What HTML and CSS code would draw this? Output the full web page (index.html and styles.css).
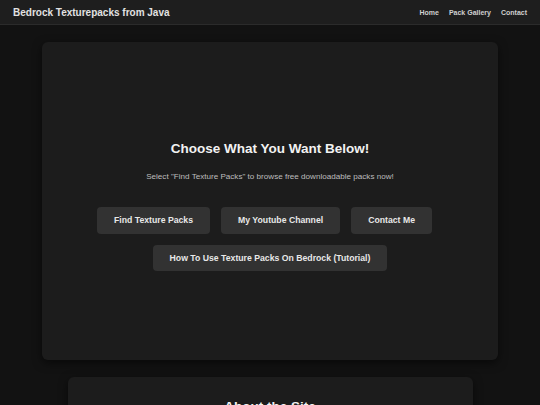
FILE: index.html
```html
<!DOCTYPE html>
<html lang="en">
<head>
    <meta charset="UTF-8">
    <meta name="viewport" content="width=device-width, initial-scale=1.0">
    <title>Bedrock Texturepacks from Java</title>
    <link rel="stylesheet" href="styles.css">
</head>
<body>
    <header class="topbar">
        <div class="site-title">Bedrock Texturepacks from Java</div>
        <nav class="nav">
            <a href="#">Home</a>
            <a href="#">Pack Gallery</a>
            <a href="#">Contact</a>
        </nav>
    </header>

    <main class="main">
        <section class="card hero">
            <h2>Choose What You Want Below!</h2>
            <p class="subtitle">Select "Find Texture Packs" to browse free downloadable packs now!</p>
            <div class="buttons">
                <a class="btn" href="#">Find Texture Packs</a>
                <a class="btn" href="#">My Youtube Channel</a>
                <a class="btn" href="#">Contact Me</a>
                <a class="btn" href="#">How To Use Texture Packs On Bedrock (Tutorial)</a>
            </div>
        </section>

        <section class="card about">
            <h2>About the Site</h2>
            <p class="subtitle">Java texture packs converted for Minecraft Bedrock Edition.</p>
        </section>
    </main>
</body>
</html>
```

FILE: styles.css
```css
body {
    font-family: 'Liberation Sans', Arial, sans-serif;
    background-color: #121212;
    color: #e6e6e6;
    margin: 0;
    padding: 0;
}
.topbar {
    display: flex;
    justify-content: space-between;
    align-items: center;
    height: 24px;
    padding: 0 13px;
    background-color: #1e1e1e;
    border-bottom: 1px solid #2b2b2b;
}
.site-title {
    font-size: 10px;
    font-weight: bold;
    color: #e2e2e2;
}
.nav {
    display: flex;
    gap: 10px;
}
.nav a {
    font-size: 7px;
    font-weight: bold;
    color: #cfcfcf;
    text-decoration: none;
}
.main {
    padding: 17px 0;
}
.card {
    background-color: #1c1c1c;
    border-radius: 6px;
    box-shadow: 0 3px 10px rgba(0, 0, 0, 0.55);
    margin: 0 auto 17px;
    text-align: center;
    box-sizing: border-box;
}
.hero {
    width: 456px;
    padding: 99px 20px 78px;
}
.about {
    width: 75%;
    padding: 22px 20px 40px;
}
.card h2 {
    font-size: 13.5px;
    color: #f2f2f2;
    margin: 0 0 16px;
}
.subtitle {
    font-size: 8.1px;
    color: #bdbdbd;
    margin: 0 0 26px;
}
.buttons {
    display: flex;
    flex-wrap: wrap;
    justify-content: center;
    max-width: 360px;
    margin: 0 auto;
}
.btn {
    background-color: #323232;
    color: #e8e8e8;
    font-size: 8.7px;
    font-weight: bold;
    text-decoration: none;
    padding: 8px 17px;
    line-height: 10.5px;
    border-radius: 4px;
    margin: 0 11px 11px 0;
}
.btn:last-child {
    margin-right: 0;
}
.btn:hover {
    background-color: #3d3d3d;
}
```
